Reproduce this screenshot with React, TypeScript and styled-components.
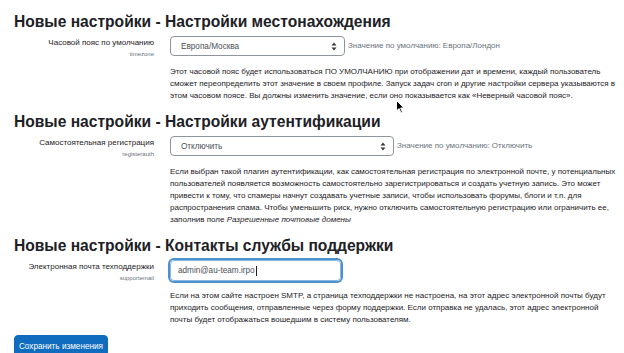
import React from 'react'
import styled, { createGlobalStyle } from 'styled-components'

const GlobalStyle = createGlobalStyle`
  html, body {
    margin: 0;
    padding: 0;
    background: #fff;
    overflow: hidden;
  }
  body {
    font-family: "Liberation Sans", Arial, sans-serif;
    color: #1d2125;
  }
`

const Page = styled.div`
  position: relative;
  width: 624px;
  height: 353px;
  padding: 11px 0 0 14px;
  box-sizing: border-box;
`

const Heading = styled.h3`
  margin: 0 0 3px 0;
  font-size: 15.6px;
  line-height: 22px;
  font-weight: 700;
  color: #1d2125;
  white-space: nowrap;
`

const Section = styled.section`
  margin-bottom: 9px;
`

const Row = styled.div`
  display: grid;
  grid-template-columns: 140px 446px;
  column-gap: 16px;
`

const LabelCol = styled.div`
  text-align: right;
  padding-top: 1px;
  white-space: nowrap;
`

const Label = styled.div`
  font-size: 8px;
  line-height: 12px;
  color: #1d2125;
`

const Key = styled.div`
  font-size: 6px;
  line-height: 9px;
  color: #6a737b;
  margin-top: 1px;
`

const Controls = styled.div`
  display: flex;
  align-items: flex-start;
  gap: 3px;
  height: 20px;
`

const Select = styled.div<{ $width: number }>`
  width: ${p => p.$width}px;
  height: 20px;
  box-sizing: border-box;
  border: 1px solid #8f959e;
  border-radius: 4px;
  display: flex;
  align-items: center;
  justify-content: space-between;
  padding: 0 7px 0 10px;
  font-size: 8.2px;
  color: #495057;
`

const Field = styled.div<{ $width: number }>`
  width: ${p => p.$width}px;
  height: 21px;
  box-sizing: border-box;
  border: 1px solid #8bb6df;
  border-radius: 4px;
  box-shadow: 0 0 0 2px rgba(15, 108, 191, 0.75);
  display: flex;
  align-items: center;
  padding: 0 7px;
  font-size: 8.2px;
  color: #495057;
`

const Caret = styled.span`
  display: inline-block;
  width: 1px;
  height: 10px;
  background: #1d2125;
  margin-left: 1px;
`

const DefaultValue = styled.span`
  font-size: 8px;
  line-height: 20px;
  color: #6a737b;
  white-space: nowrap;
`

const Description = styled.div`
  margin-top: 10px;
  font-size: 8px;
  line-height: 12px;
  color: #1d2125;
`

const SaveButton = styled.button`
  margin-top: -3px;
  background: #0f6cbf;
  color: #fff;
  border: 1px solid #0f6cbf;
  border-radius: 4px;
  font-family: inherit;
  font-size: 8.2px;
  height: 23px;
  width: 94px;
  padding: 0;
  white-space: nowrap;
`

const Pointer = styled.svg`
  position: absolute;
  left: 396px;
  top: 100px;
`

const Arrows = () => (
  <svg width="6" height="9" viewBox="0 0 6 9">
    <path d="M3 0.5 L5.5 3.5 H0.5 Z" fill="#343a40" />
    <path d="M3 8.5 L5.5 5.5 H0.5 Z" fill="#343a40" />
  </svg>
)

type Setting = {
  heading: string
  label: string
  name: string
  control: React.ReactNode
  defaultText?: string
  description: React.ReactNode
}

const settings: Setting[] = [
  {
    heading: 'Новые настройки - Настройки местонахождения',
    label: 'Часовой пояс по умолчанию',
    name: 'timezone',
    control: (
      <Select $width={175}>
        <span>Европа/Москва</span>
        <Arrows />
      </Select>
    ),
    defaultText: 'Значение по умолчанию: Европа/Лондон',
    description:
      'Этот часовой пояс будет использоваться ПО УМОЛЧАНИЮ при отображении дат и времени, каждый пользователь сможет переопределить этот значение в своем профиле. Запуск задач cron и другие настройки сервера указываются в этом часовом поясе. Вы должны изменить значение, если оно показывается как «Неверный часовой пояс».',
  },
  {
    heading: 'Новые настройки - Настройки аутентификации',
    label: 'Самостоятельная регистрация',
    name: 'registerauth',
    control: (
      <Select $width={224}>
        <span>Отключить</span>
        <Arrows />
      </Select>
    ),
    defaultText: 'Значение по умолчанию: Отключить',
    description: (
      <>
        Если выбран такой плагин аутентификации, как самостоятельная регистрация по электронной почте, у потенциальных
        пользователей появляется возможность самостоятельно зарегистрироваться и создать учетную запись. Это может
        привести к тому, что спамеры начнут создавать учетные записи, чтобы использовать форумы, блоги и т.п. для
        распространения спама. Чтобы уменьшить риск, нужно отключить самостоятельную регистрацию или ограничить ее,
        заполнив поле <i>Разрешенные почтовые домены</i>
      </>
    ),
  },
  {
    heading: 'Новые настройки - Контакты службы поддержки',
    label: 'Электронная почта техподдержки',
    name: 'supportemail',
    control: (
      <Field $width={171}>
        admin@au-team.irpo
        <Caret />
      </Field>
    ),
    description:
      'Если на этом сайте настроен SMTP, а страница техподдержки не настроена, на этот адрес электронной почты будут приходить сообщения, отправленные через форму поддержки. Если отправка не удалась, этот адрес электронной почты будет отображаться вошедшим в систему пользователям.',
  },
]

export default function App() {
  return (
    <>
      <GlobalStyle />
      <Page>
        {settings.map(s => (
          <Section key={s.name}>
            <Heading>{s.heading}</Heading>
            <Row>
              <LabelCol>
                <Label>{s.label}</Label>
                <Key>{s.name}</Key>
              </LabelCol>
              <div>
                <Controls>
                  {s.control}
                  {s.defaultText && <DefaultValue>{s.defaultText}</DefaultValue>}
                </Controls>
                <Description>{s.description}</Description>
              </div>
            </Row>
          </Section>
        ))}
        <SaveButton>Сохранить изменения</SaveButton>
        <Pointer width="9" height="14" viewBox="0 0 9 14">
          <path d="M0.5 0.5 V11 L3 8.5 L5 13 L6.5 12.3 L4.6 8 H8 Z" fill="#000" stroke="#fff" strokeWidth="1" />
        </Pointer>
      </Page>
    </>
  )
}
